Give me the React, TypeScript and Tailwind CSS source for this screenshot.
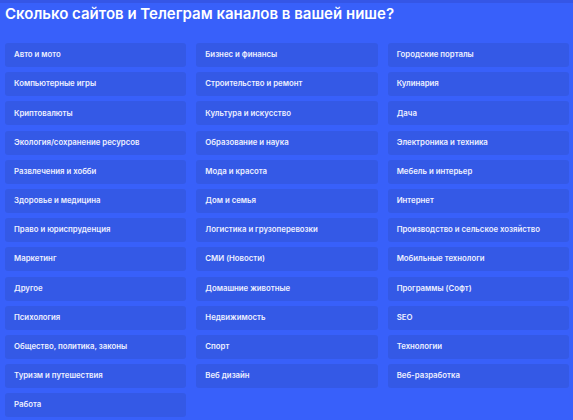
import React from "react";

const niches = [
  "Авто и мото",
  "Бизнес и финансы",
  "Городские порталы",
  "Компьютерные игры",
  "Строительство и ремонт",
  "Кулинария",
  "Криптовалюты",
  "Культура и искусство",
  "Дача",
  "Экология/сохранение ресурсов",
  "Образование и наука",
  "Электроника и техника",
  "Развлечения и хобби",
  "Мода и красота",
  "Мебель и интерьер",
  "Здоровье и медицина",
  "Дом и семья",
  "Интернет",
  "Право и юриспруденция",
  "Логистика и грузоперевозки",
  "Производство и сельское хозяйство",
  "Маркетинг",
  "СМИ (Новости)",
  "Мобильные технологи",
  "Другое",
  "Домашние животные",
  "Программы (Софт)",
  "Психология",
  "Недвижимость",
  "SEO",
  "Общество, политика, законы",
  "Спорт",
  "Технологии",
  "Туризм и путешествия",
  "Веб дизайн",
  "Веб-разработка",
  "Работа",
];

const App = () => {
  return (
    <div className="w-[573px] min-h-[420px] bg-[#3860fa] border-t-[3px] border-[#3556e6] pt-[1px] pl-[5px] pr-[4px] font-['Inter',sans-serif]">
      <h1 className="text-[15px] leading-[20px] font-semibold text-white">
        Сколько сайтов и Телеграм каналов в вашей нише?
      </h1>
      <div className="mt-[19px] grid grid-cols-3 gap-x-[10px] gap-y-[5.2px]">
        {niches.map((item) => (
          <div
            key={item}
            className="h-[24px] flex items-center rounded-[3px] bg-[#3459e6] pl-[9px] text-[7.8px] font-semibold text-[#eef0ff] whitespace-nowrap"
          >
            {item}
          </div>
        ))}
      </div>
    </div>
  );
};

export default App;
